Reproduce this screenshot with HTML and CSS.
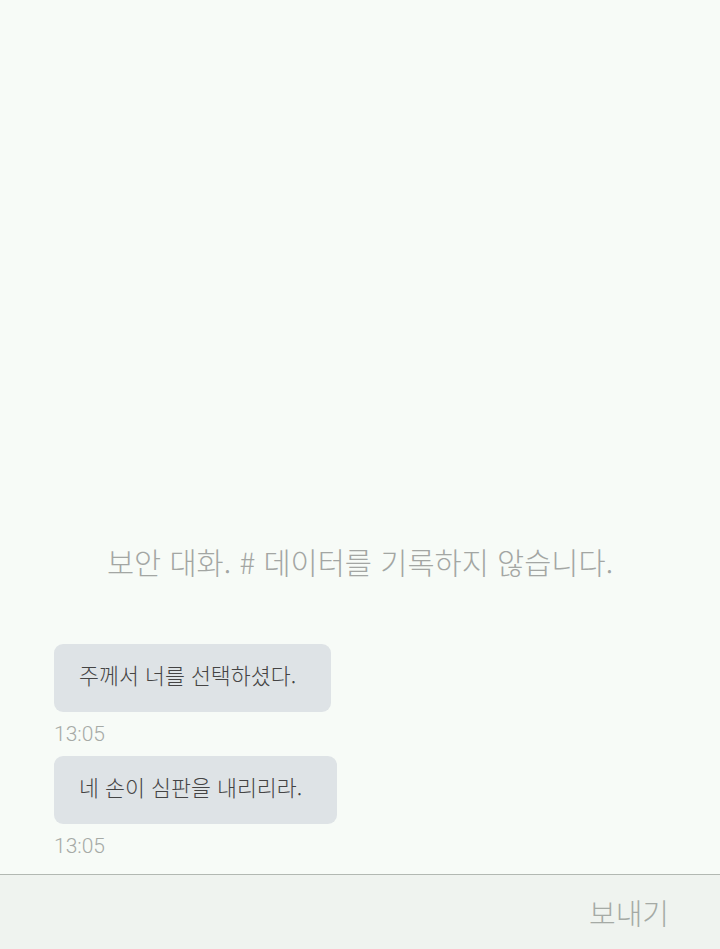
FILE: index.html
```html
<!DOCTYPE html>
<html lang="ko">
<head>
<meta charset="utf-8">
<link rel="stylesheet" href="styles.css">
</head>
<body>
<div class="app">
  <main class="chat">
    <p class="notice">보안 대화. # 데이터를 기록하지 않습니다.</p>
    <div class="msg">
      <div class="bubble">주께서 너를 선택하셨다.</div>
      <div class="time">13:05</div>
    </div>
    <div class="msg">
      <div class="bubble">네 손이 심판을 내리리라.</div>
      <div class="time">13:05</div>
    </div>
  </main>
  <footer class="bar">
    <span class="send">보내기</span>
  </footer>
</div>
</body>
</html>
```
FILE: styles.css
```css
html, body {
  margin: 0;
  padding: 0;
  background: #f7fbf7;
  font-family: "Noto Sans CJK KR", "Noto Sans", sans-serif;
  font-weight: 400;
}
.app {
  height: 949px;
  display: flex;
  flex-direction: column;
}
.chat {
  flex: 1;
  display: flex;
  flex-direction: column;
  justify-content: flex-end;
  padding: 0 54px 6px;
}
.notice {
  margin: 0 0 63px;
  text-align: center;
  font-size: 29.5px;
  line-height: 40px;
  font-weight: 300;
  color: #a3a6a3;
}
.msg {
  display: flex;
  flex-direction: column;
  align-items: flex-start;
}
.bubble {
  background: #dee3e6;
  border-radius: 9px;
  padding: 0 35px 8px 25px;
  height: 68px;
  box-sizing: border-box;
  display: flex;
  align-items: center;
  font-size: 21.7px;
  font-weight: 300;
  color: #444;
}
.time {
  font-family: "Roboto", "Noto Sans", sans-serif;
  font-size: 21px;
  line-height: 30px;
  margin: 7px 0 7px;
  font-weight: 300;
  color: #a6aaa6;
}
.bar {
  height: 74px;
  border-top: 1px solid #b2b8b2;
  background: #eff3ef;
  display: flex;
  align-items: center;
  justify-content: flex-end;
  padding-right: 51px;
}
.send {
  font-size: 29px;
  font-weight: 300;
  color: #a5aaa5;
}
```
